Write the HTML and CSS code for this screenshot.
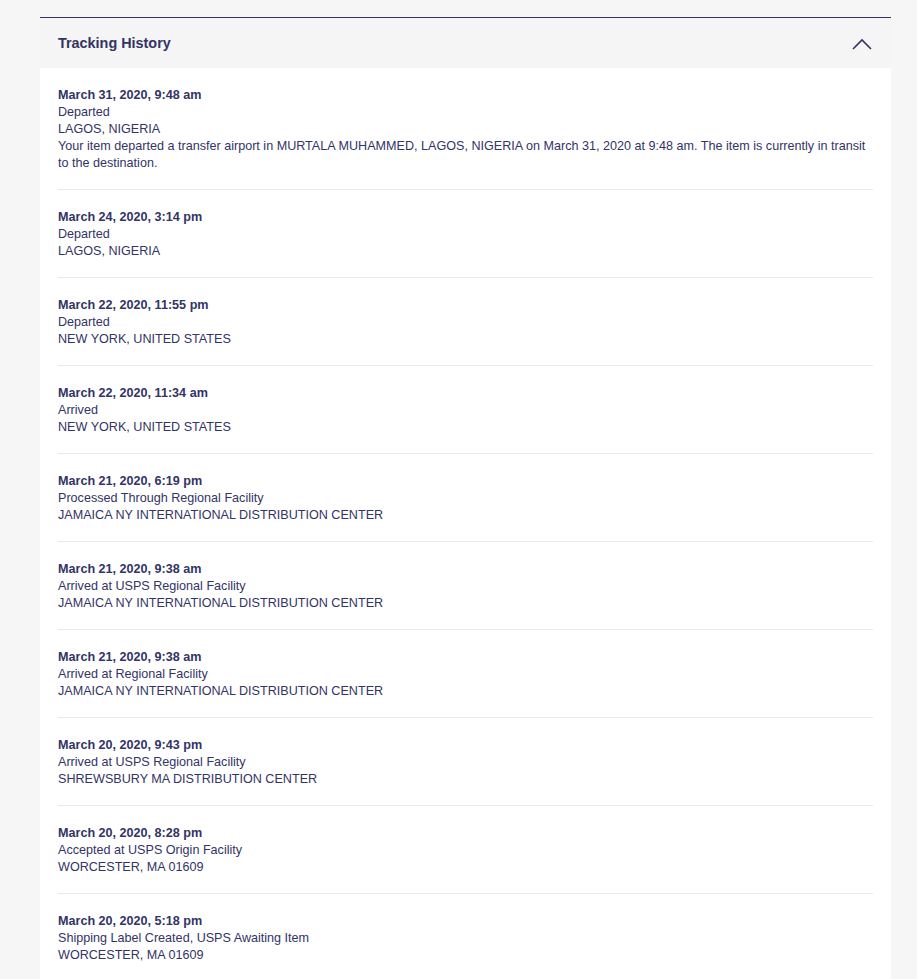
FILE: index.html
```html
<!DOCTYPE html>
<html lang="en">
<head>
<meta charset="utf-8">
<title>Tracking History</title>
<link rel="stylesheet" href="styles.css">
</head>
<body>
<section class="tracking">
  <header class="tracking-head">
    <h2 class="tracking-title">Tracking History</h2>
    <svg class="chevron" width="20" height="12" viewBox="0 0 20 12" aria-hidden="true">
      <path d="M1 11 L10 2 L19 11" fill="none" stroke="#333366" stroke-width="1.6"/>
    </svg>
  </header>
  <div class="tracking-body">
    <div class="event">
      <div class="event-date">March 31, 2020, 9:48 am</div>
      <div>Departed</div>
      <div>LAGOS, NIGERIA</div>
      <div>Your item departed a transfer airport in MURTALA MUHAMMED, LAGOS, NIGERIA on March 31, 2020 at 9:48 am. The item is currently in transit to the destination.</div>
    </div>
    <div class="event">
      <div class="event-date">March 24, 2020, 3:14 pm</div>
      <div>Departed</div>
      <div>LAGOS, NIGERIA</div>
    </div>
    <div class="event">
      <div class="event-date">March 22, 2020, 11:55 pm</div>
      <div>Departed</div>
      <div>NEW YORK, UNITED STATES</div>
    </div>
    <div class="event">
      <div class="event-date">March 22, 2020, 11:34 am</div>
      <div>Arrived</div>
      <div>NEW YORK, UNITED STATES</div>
    </div>
    <div class="event">
      <div class="event-date">March 21, 2020, 6:19 pm</div>
      <div>Processed Through Regional Facility</div>
      <div>JAMAICA NY INTERNATIONAL DISTRIBUTION CENTER</div>
    </div>
    <div class="event">
      <div class="event-date">March 21, 2020, 9:38 am</div>
      <div>Arrived at USPS Regional Facility</div>
      <div>JAMAICA NY INTERNATIONAL DISTRIBUTION CENTER</div>
    </div>
    <div class="event">
      <div class="event-date">March 21, 2020, 9:38 am</div>
      <div>Arrived at Regional Facility</div>
      <div>JAMAICA NY INTERNATIONAL DISTRIBUTION CENTER</div>
    </div>
    <div class="event">
      <div class="event-date">March 20, 2020, 9:43 pm</div>
      <div>Arrived at USPS Regional Facility</div>
      <div>SHREWSBURY MA DISTRIBUTION CENTER</div>
    </div>
    <div class="event">
      <div class="event-date">March 20, 2020, 8:28 pm</div>
      <div>Accepted at USPS Origin Facility</div>
      <div>WORCESTER, MA 01609</div>
    </div>
    <div class="event">
      <div class="event-date">March 20, 2020, 5:18 pm</div>
      <div>Shipping Label Created, USPS Awaiting Item</div>
      <div>WORCESTER, MA 01609</div>
    </div>
  </div>
</section>
</body>
</html>
```

FILE: styles.css
```css
html, body {
  margin: 0;
  padding: 0;
  background: #f6f6f6;
}
body {
  font-family: "Liberation Sans", Arial, sans-serif;
  color: #333366;
  font-size: 12.6px;
  line-height: 17px;
}
.tracking {
  margin: 17px 26px 0 40px;
  width: 851px;
  border-top: 1px solid #333366;
}
.tracking-head {
  height: 50px;
  display: flex;
  align-items: center;
  justify-content: space-between;
  padding: 0 19px 0 18px;
  background: #f5f5f5;
}
.tracking-title {
  margin: 0;
  font-size: 14.4px;
  font-weight: bold;
  color: #333366;
}
.chevron {
  display: block;
  margin-top: 2px;
}
.tracking-body {
  background: #ffffff;
  padding: 0 18px 40px;
}
.event {
  padding: 19px 0 17px;
  border-bottom: 1px solid #e8e8e8;
}
.event:last-child {
  border-bottom: none;
}
.event-date {
  font-weight: bold;
}
```
